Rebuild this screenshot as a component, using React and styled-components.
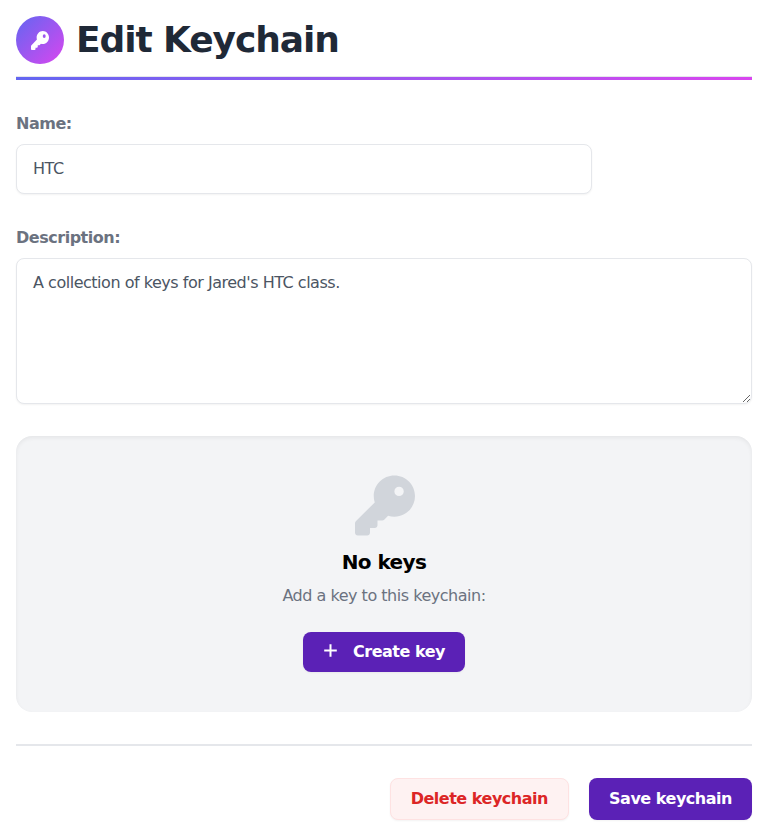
import React from "react";
import styled, { createGlobalStyle } from "styled-components";

const GlobalStyle = createGlobalStyle`
  *, *::before, *::after { box-sizing: border-box; letter-spacing: -0.03em; }
  body {
    margin: 0;
    background: #fff;
    color: #000;
    font-family: "DejaVu Sans", sans-serif;
    font-size: 16px;
    line-height: 24px;
  }
  h1, h2, p { margin: 0; }
  input, textarea, button { font: inherit; }
`;

const Page = styled.main`
  display: flex;
  flex-direction: column;
  padding: 16px;
`;

const Header = styled.header`
  display: flex;
  align-items: center;
  gap: 12px;
  height: 61px;
  padding-bottom: 12px;
  border-bottom: 1px solid #e5e7eb;
`;

const HeaderRule = styled.div`
  height: 3px;
  background: linear-gradient(to right, #6366f1, #d946ef);
`;

const IconBadge = styled.span`
  display: flex;
  align-items: center;
  justify-content: center;
  width: 48px;
  height: 48px;
  padding-top: 1px;
  border-radius: 50%;
  color: #fff;
  background: linear-gradient(to bottom right, #6366f1, #d946ef);
`;

const Title = styled.h1`
  color: #1f2937;
  font-size: 36px;
  line-height: 40px;
  font-weight: 700;
`;

const Field = styled.div`
  display: flex;
  flex-direction: column;
  align-items: flex-start;
  gap: 8px;
  margin-top: 32px;
`;

const Label = styled.label`
  color: #6b7280;
  font-weight: 700;
`;

const Input = styled.input`
  display: block;
  width: 576px;
  height: 50px;
  padding: 11px 16px 13px;
  border: 1px solid #e5e7eb;
  border-radius: 8px;
  outline: none;
  background: #fff;
  color: #4b5563;
  box-shadow: 0 1px 2px rgba(0, 0, 0, 0.05);
`;

const TextArea = styled(Input)`
  width: 100%;
  height: 146px;
  padding: 12px 16px;
  resize: vertical;
`;

const EmptyState = styled.section`
  display: flex;
  flex-direction: column;
  align-items: center;
  height: 276px;
  margin-top: 32px;
  padding-top: 39px;
  border-radius: 16px;
  background: #f3f4f6;
  box-shadow: inset 0 2px 4px rgba(0, 0, 0, 0.06);
`;

const EmptyIcon = styled.div`
  display: flex;
  padding-left: 2px;
  height: 60px;
  color: #d1d5db;
`;

const EmptyTitle = styled.h2`
  margin-top: 13px;
  font-size: 20px;
  line-height: 28px;
`;

const EmptyText = styled.p`
  margin: 8px 0 24px;
  color: #6b7280;
`;

const Button = styled.button`
  display: flex;
  align-items: center;
  height: ${(p) => p.$height || 42}px;
  padding: 0 20px;
  border: ${(p) => (p.$danger ? "1px solid #fee2e2" : "0")};
  border-radius: 8px;
  background: ${(p) => (p.$danger ? "#fef2f2" : "#5b21b6")};
  color: ${(p) => (p.$danger ? "#dc2626" : "#fff")};
  font-weight: 700;
  white-space: nowrap;
  box-shadow: 0 1px 2px rgba(0, 0, 0, 0.05);
`;

const PlusSvg = styled.svg`
  flex: none;
  margin: 0 16px 3px 0;
`;

const Footer = styled.footer`
  display: flex;
  justify-content: flex-end;
  gap: 20px;
  margin-top: 32px;
  padding-top: 32px;
  border-top: 2px solid #e5e7eb;
`;

const KEY_BODY =
  "M336 352c97.2 0 176-78.8 176-176S433.2 0 336 0S160 78.8 160 176c0 18.7 2.9 36.8 8.3 53.7L7 391c-4.5 4.5-7 10.6-7 17v80c0 13.3 10.7 24 24 24h80c13.3 0 24-10.7 24-24V448h40c13.3 0 24-10.7 24-24V384h40c6.4 0 12.5-2.5 17-7l33.3-33.3c16.9 5.4 35 8.3 53.7 8.3z";

const KeyIcon = () => (
  <svg width="60" height="61" viewBox="0 -4 512 520.5" fill="currentColor" aria-hidden="true">
    <path d={KEY_BODY + "M376 96a40 40 0 1 1 0 80 40 40 0 1 1 0-80z"} />
  </svg>
);

const SmallKeyIcon = () => (
  <svg width="18" height="19" viewBox="0 0 512 512" preserveAspectRatio="none" fill="currentColor" aria-hidden="true">
    <path d={KEY_BODY + "M376 88a42 50 0 1 1 0 100 42 50 0 1 1 0-100z"} />
  </svg>
);

const PlusIcon = () => (
  <PlusSvg width="14" height="13" viewBox="0 0 14 13" fill="none" stroke="currentColor" strokeWidth="2" aria-hidden="true">
    <path d="M7.5 0.2v12.6M1.2 6.5h12.6" />
  </PlusSvg>
);

export default function App() {
  return (
    <>
      <GlobalStyle />
      <Page>
        <Header>
          <IconBadge><SmallKeyIcon /></IconBadge>
          <Title>Edit Keychain</Title>
        </Header>
        <HeaderRule />
        <Field>
          <Label htmlFor="name">Name:</Label>
          <Input id="name" defaultValue="HTC" />
        </Field>
        <Field>
          <Label htmlFor="description">Description:</Label>
          <TextArea as="textarea" id="description" defaultValue="A collection of keys for Jared's HTC class." />
        </Field>
        <EmptyState>
          <EmptyIcon><KeyIcon /></EmptyIcon>
          <EmptyTitle>No keys</EmptyTitle>
          <EmptyText>Add a key to this keychain:</EmptyText>
          <Button type="button" $height={40}><PlusIcon />Create key</Button>
        </EmptyState>
        <Footer>
          <Button type="button" $danger>Delete keychain</Button>
          <Button type="submit">Save keychain</Button>
        </Footer>
      </Page>
    </>
  );
}
